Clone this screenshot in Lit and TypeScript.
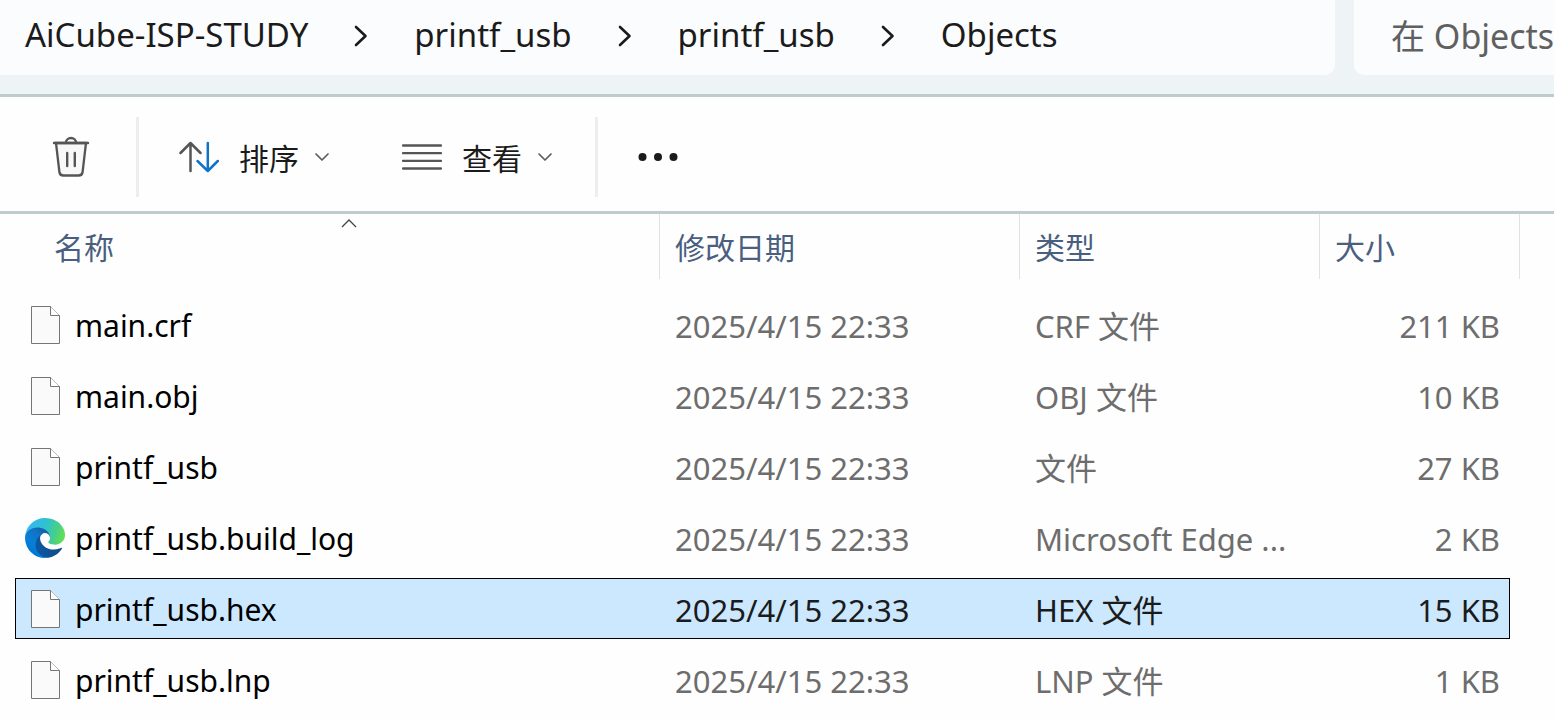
import { LitElement, html, css, svg } from "lit";
import { customElement, state } from "lit/decorators.js";
import { classMap } from "lit/directives/class-map.js";

interface FileEntry {
  name: string;
  modified: string;
  type: string;
  size: string;
  icon: "file" | "edge";
}

const CRUMBS = ["AiCube-ISP-STUDY", "printf_usb", "printf_usb", "Objects"];

const FILES: FileEntry[] = [
  { name: "main.crf", modified: "2025/4/15 22:33", type: "CRF 文件", size: "211 KB", icon: "file" },
  { name: "main.obj", modified: "2025/4/15 22:33", type: "OBJ 文件", size: "10 KB", icon: "file" },
  { name: "printf_usb", modified: "2025/4/15 22:33", type: "文件", size: "27 KB", icon: "file" },
  { name: "printf_usb.build_log", modified: "2025/4/15 22:33", type: "Microsoft Edge ...", size: "2 KB", icon: "edge" },
  { name: "printf_usb.hex", modified: "2025/4/15 22:33", type: "HEX 文件", size: "15 KB", icon: "file" },
  { name: "printf_usb.lnp", modified: "2025/4/15 22:33", type: "LNP 文件", size: "1 KB", icon: "file" },
];

const chevronRight = html`<svg class="crumb-sep" width="14" height="22" viewBox="0 0 14 22" aria-hidden="true">
  <path d="M2 2 11.5 11 2 20" fill="none" stroke="#1b1b1b" stroke-width="2.6" stroke-linecap="round" stroke-linejoin="round" />
</svg>`;

const chevronDown = html`<svg width="16" height="10" viewBox="0 0 16 10" aria-hidden="true">
  <path d="M2 2 8 8 14 2" fill="none" stroke="#5c5c5c" stroke-width="1.7" stroke-linecap="round" stroke-linejoin="round" />
</svg>`;

const trashIcon = html`<svg width="40" height="42" viewBox="0 0 40 42" aria-hidden="true">
  <path d="M5 7 8.4 36a4 4 0 0 0 4 3.5h15.2a4 4 0 0 0 4-3.5L35 7z" fill="#f8f8f8" stroke="#555" stroke-width="2.3" />
  <path d="M3 7H37" stroke="#555" stroke-width="2.4" stroke-linecap="round" />
  <path d="M15 6.5a5 4.5 0 0 1 10 0" fill="none" stroke="#555" stroke-width="2.3" />
  <path d="M16.2 17V30M23.8 17V30" stroke="#555" stroke-width="2.4" stroke-linecap="round" />
</svg>`;

const sortIcon = html`<svg width="40" height="32" viewBox="0 0 40 32" fill="none" stroke-width="2.5" stroke-linecap="round" stroke-linejoin="round" aria-hidden="true">
  <path d="M11.5 30V2M1.5 12 11.5 2 21.5 12" stroke="#555" />
  <path d="M28.8 2V30M18.5 20 28.8 30 38.8 20" stroke="#0f73c9" />
</svg>`;

const viewIcon = html`<svg width="40" height="28" viewBox="0 0 40 28" aria-hidden="true">
  <path d="M1 2.5H39M1 10.2H39M1 17.8H39M1 25.5H39" stroke="#555" stroke-width="2.3" stroke-linecap="round" />
</svg>`;

const moreIcon = html`<svg width="40" height="10" viewBox="0 0 40 10" fill="#1b1b1b" aria-hidden="true">
  <circle cx="4.5" cy="5" r="4" /><circle cx="20" cy="5" r="4" /><circle cx="35.5" cy="5" r="4" />
</svg>`;

const sortCaret = html`<svg class="caret" width="18" height="10" viewBox="0 0 18 10" aria-hidden="true">
  <path d="M2 9 9 2 16 9" fill="none" stroke="#444" stroke-width="1.3" />
</svg>`;

const fileIcon = html`<svg width="30" height="38" viewBox="0 0 30 38" aria-hidden="true">
  <path d="M1.5.5H20.5L29.5 9.5V37.5H1.5Z" fill="#fafafa" stroke="#757575" />
  <path d="M20.5.5V9.5H29.5" fill="#fff" stroke="#757575" />
</svg>`;

const edgeIcon = html`<svg width="40" height="40" viewBox="4.6 4.9 256 256" aria-hidden="true">
  <defs>
    <linearGradient id="deep" x1="63" y1="178" x2="242" y2="178" gradientUnits="userSpaceOnUse">
      <stop offset="0" stop-color="#0c59a4" /><stop offset="1" stop-color="#114a8b" />
    </linearGradient>
    <linearGradient id="mid" x1="157" y1="104" x2="46" y2="225" gradientUnits="userSpaceOnUse">
      <stop offset="0" stop-color="#155fa8" /><stop offset=".3" stop-color="#1273c4" />
      <stop offset=".67" stop-color="#0680d7" /><stop offset="1" stop-color="#0078d4" />
    </linearGradient>
    <linearGradient id="wave" x1="20" y1="60" x2="255" y2="130" gradientUnits="userSpaceOnUse">
      <stop offset="0" stop-color="#35b8ee" /><stop offset=".45" stop-color="#2fc2cf" />
      <stop offset=".75" stop-color="#46cf8b" /><stop offset="1" stop-color="#66e04f" />
    </linearGradient>
  </defs>
  ${svg`<path fill="url(#deep)" d="M235.68 195.46a93.73 93.73 0 0 1-10.54 4.71 101.87 101.87 0 0 1-35.9 6.46c-47.32 0-88.54-32.55-88.54-74.32A31.48 31.48 0 0 1 117.13 105c-42.8 1.8-53.8 46.4-53.8 72.53 0 73.88 68.09 81.37 82.76 81.37 7.91 0 19.84-2.3 27-4.56l1.31-.44a128.34 128.34 0 0 0 66.6-52.8 4 4 0 0 0-5.32-5.64z" />
  <path fill="url(#mid)" d="M110.34 246.34A79.2 79.2 0 0 1 87.6 225a80.72 80.72 0 0 1 29.53-120c3.12-1.47 8.45-4.13 15.54-4a32.35 32.35 0 0 1 25.69 13 31.88 31.88 0 0 1 6.36 18.66c0-.21 24.46-79.6-80-79.6-43.9 0-80 41.66-80 78.21a130.15 130.15 0 0 0 12.11 56 128 128 0 0 0 156.38 67.11 75.55 75.55 0 0 1-62.78-8z" />
  <path fill="url(#wave)" d="M156.94 153.78c-.81 1.05-3.3 2.5-3.3 5.66 0 2.61 1.7 5.12 4.72 7.23 14.38 10 41.49 8.68 41.56 8.68a59.56 59.56 0 0 0 30.27-8.35A61.38 61.38 0 0 0 260.62 114c.26-22.41-8-37.31-11.34-43.91C228.1 28.65 182.36 4.92 132.63 4.92a128 128 0 0 0-128 126.2c.48-36.54 36.8-66.05 80-66.05 3.5 0 23.46.34 42 10.07 16.34 8.58 24.9 18.94 30.85 29.21 6.18 10.67 7.28 24.15 7.28 29.52s-2.74 13.33-7.82 19.91z" />`}
</svg>`;

@customElement("app-root")
export class AppRoot extends LitElement {
  @state() private selected = 4;

  static styles = css`
    :host {
      display: block;
      height: 100vh;
      overflow: hidden;
      background: #fefefe;
      color: #1b1b1b;
      font-family: "Noto Sans", "Noto Sans CJK SC", sans-serif;
      font-size: 30px;
      line-height: 40px;
    }
    button, input {
      font: inherit;
      color: inherit;
      border: 0;
      padding: 0;
      background: none;
    }
    .topbar {
      display: flex;
      gap: 19px;
      padding-bottom: 19px;
      background: #eef3f6;
      border-bottom: 3px solid #c0cbd0;
      font-size: 33px;
    }
    .address {
      flex: 1;
      background: #fbfcfe;
      border-radius: 0 0 10px 0;
    }
    .crumbs {
      display: flex;
      align-items: center;
      height: 75px;
      margin: 0;
      padding: 0 0 5px 25px;
      box-sizing: border-box;
      list-style: none;
    }
    .crumbs li {
      display: flex;
      align-items: center;
    }
    .crumb-sep {
      margin: 2px 46px 0;
    }
    .search {
      width: 200px;
      box-sizing: border-box;
      padding: 0 0 4px 37px;
      background: #fbfcfe;
      border-radius: 0 0 0 10px;
      font-size: 34px;
    }
    .search::placeholder {
      color: #606060;
      opacity: 1;
    }
    .toolbar {
      display: flex;
      align-items: center;
      padding: 20px 0 14px 48px;
      border-bottom: 3px solid #c0cbd0;
    }
    .toolbar button {
      display: flex;
      align-items: center;
      gap: 20px;
    }
    .toolbar .delete {
      justify-content: center;
      width: 46px;
    }
    .toolbar svg {
      display: block;
    }
    .divider {
      width: 3px;
      height: 80px;
      background: #ededed;
      margin: 0 40px 0 42px;
    }
    .menus {
      display: flex;
      gap: 72px;
    }
    .menu-label {
      display: flex;
      align-items: center;
      gap: 15px;
    }
    .menu-text {
      padding-top: 3px;
    }
    .list {
      padding-right: 34px;
    }
    table {
      width: 100%;
      table-layout: fixed;
      border-collapse: collapse;
    }
    .col-date { width: 360px; }
    .col-type { width: 300px; }
    .col-size { width: 200px; }
    th {
      padding: 0 0 10px;
      font-weight: 400;
      text-align: left;
      color: #4a5f80;
    }
    .head {
      position: relative;
      display: flex;
      align-items: center;
      height: 65px;
      padding: 3px 0 0 15px;
      box-sizing: border-box;
      border-right: 1px solid #dfe3e6;
    }
    .head-name {
      padding-left: 54px;
    }
    .caret {
      position: absolute;
      top: 4px;
      left: calc(50% + 19px);
      margin-left: -9px;
    }
    td {
      padding: 5px 0;
      color: #6d6d6d;
      font-size: 31px;
    }
    td:first-child {
      padding-left: 15px;
      color: #000;
      font-size: 30px;
    }
    td:last-child {
      padding-right: 10px;
    }
    .cell {
      display: flex;
      align-items: center;
      height: 61px;
      padding: 2px 15px 0;
      box-sizing: border-box;
      border: 0 solid transparent;
      border-width: 1px 0;
      white-space: nowrap;
    }
    td:first-child .cell {
      gap: 10px;
      padding-left: 9px;
      border-left-width: 1px;
    }
    td:last-child .cell {
      justify-content: flex-end;
      padding-right: 9px;
      border-right-width: 1px;
    }
    .icon {
      display: flex;
      justify-content: center;
      width: 40px;
      padding-bottom: 2px;
    }
    .selected .cell {
      background: #cce8ff;
      border-color: #000;
      color: #1b1b1b;
    }
    .selected td:first-child .cell {
      color: #000;
    }
  `;

  render() {
    return html`
      <header class="topbar">
        <nav class="address" aria-label="路径">
          <ol class="crumbs">
            ${CRUMBS.map((crumb, i) => html`<li>${i > 0 ? chevronRight : null}<button type="button">${crumb}</button></li>`)}
          </ol>
        </nav>
        <input class="search" type="text" placeholder="在 Objects" aria-label="搜索" />
      </header>

      <div class="toolbar" role="toolbar">
        <button class="delete" type="button" aria-label="删除">${trashIcon}</button>
        <span class="divider"></span>
        <div class="menus">
          <button type="button">${sortIcon}<span class="menu-label"><span class="menu-text">排序</span>${chevronDown}</span></button>
          <button type="button">${viewIcon}<span class="menu-label"><span class="menu-text">查看</span>${chevronDown}</span></button>
        </div>
        <span class="divider"></span>
        <button type="button" aria-label="更多">${moreIcon}</button>
      </div>

      <main class="list">
        <table>
          <colgroup>
            <col />
            <col class="col-date" />
            <col class="col-type" />
            <col class="col-size" />
          </colgroup>
          <thead>
            <tr>
              <th scope="col" aria-sort="ascending"><div class="head head-name">名称${sortCaret}</div></th>
              <th scope="col"><div class="head">修改日期</div></th>
              <th scope="col"><div class="head">类型</div></th>
              <th scope="col"><div class="head">大小</div></th>
            </tr>
          </thead>
          <tbody>
            ${FILES.map(
              (file, i) => html`<tr class=${classMap({ selected: i === this.selected })} @click=${() => (this.selected = i)}>
                <td><div class="cell"><span class="icon">${file.icon === "edge" ? edgeIcon : fileIcon}</span>${file.name}</div></td>
                <td><div class="cell">${file.modified}</div></td>
                <td><div class="cell">${file.type}</div></td>
                <td><div class="cell">${file.size}</div></td>
              </tr>`
            )}
          </tbody>
        </table>
      </main>
    `;
  }
}
